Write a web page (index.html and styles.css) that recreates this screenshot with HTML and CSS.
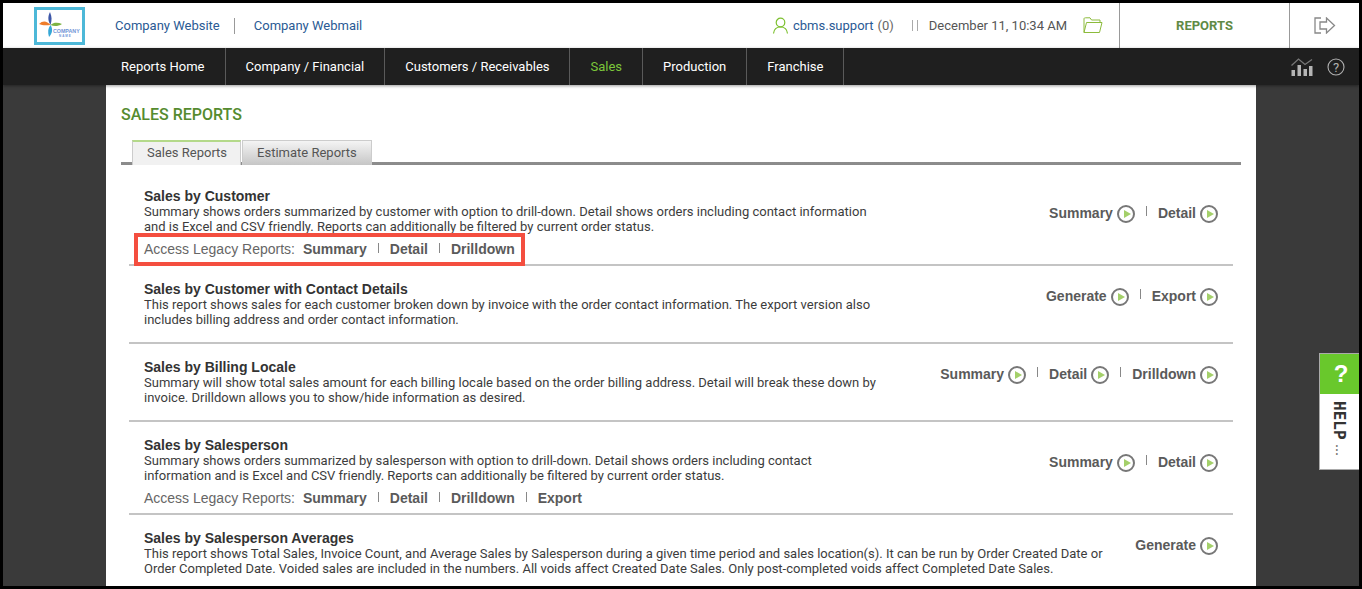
FILE: index.html
```html
<!DOCTYPE html>
<html lang="en">
<head>
<meta charset="utf-8">
<title>Sales Reports</title>
<link rel="stylesheet" href="styles.css">
</head>
<body>
<div class="page">
  <header class="top">
    <a class="logo" href="#">
      <svg width="45" height="32" viewBox="0 0 45 32">
        <path d="M13 2 C15 7 15 10 13.500 15 C11 11 10.500 7 13 2Z" fill="#3d57a8"/>
        <path d="M2 14 C6 10 10 11 13.500 15 C9 15.500 5 15.500 2 14Z" fill="#ef7d2b"/>
        <path d="M13.500 15 C17 12 21 12.500 25 14 C21 16.500 17 16.500 13.500 15Z" fill="#7cb342"/>
        <path d="M13.500 15 C16 19 15.500 23 12 27 C10.500 22 11 18 13.500 15Z" fill="#35a7d6"/>
        <text x="16" y="23" class="logo-a">COMPANY</text>
        <text x="22" y="27" class="logo-b">NAME</text>
      </svg>
    </a>
    <nav class="top-links">
      <a href="#">Company Website</a>
      <a href="#">Company Webmail</a>
    </nav>
    <div class="user">
      <svg width="17" height="17" viewBox="0 0 17 17" fill="none" stroke="#7cc02e" stroke-width="1.2"><circle cx="8.5" cy="5.5" r="4.3"/><path d="M1.5 16.5 C2 12 5 10 8.5 10 S15 12 15.5 16.5"/></svg>
      <a href="#">cbms.support</a> <span class="count">(0)</span>
    </div>
    <div class="date">December 11, 10:34 AM</div>
    <svg class="folder" width="20" height="17" viewBox="0 0 20 17" fill="none" stroke="#8cbb3c" stroke-width="1"><path d="M1 15.500 V2 C1 1 1.500 .8 2.500 .8 H7 L8.500 3 H17 V5.500"/><path d="M1 15.500 L3.500 5.500 H19 L16.500 15.500 Z"/></svg>
    <div class="module">REPORTS</div>
    <a class="logout" href="#" aria-label="Log out">
      <svg width="22" height="17" viewBox="0 0 22 17" fill="none" stroke="#888" stroke-width="1.300"><path d="M7 1 H1 V16 H7"/><path d="M6 5 H12.500 V1 L20.500 8.500 L12.500 16 V12 H6 Z"/></svg>
    </a>
  </header>
  <nav class="menu">
    <a href="#">Reports Home</a>
    <a href="#">Company / Financial</a>
    <a href="#">Customers / Receivables</a>
    <a href="#" class="on">Sales</a>
    <a href="#">Production</a>
    <a href="#">Franchise</a>
    <span class="menu-icons">
      <svg width="22" height="19" viewBox="0 0 22 19" fill="#b5b5b5"><rect x=".5" y="12" width="3.500" height="6"/><rect x="6.500" y="7" width="3.500" height="11"/><rect x="12.500" y="11" width="3.500" height="7"/><rect x="18" y="8" width="3.500" height="10"/><path d="M.5 7.500 L7.500 1 L14 6.500 L21 1.500" fill="none" stroke="#777" stroke-width="1.300"/></svg>
      <svg width="18" height="18" viewBox="0 0 18 18"><circle cx="9" cy="9" r="8" fill="none" stroke="#b0b0b0" stroke-width="1.100"/><text x="9" y="13.500" class="q">?</text></svg>
    </span>
  </nav>
  <main class="stage">
    <section class="sheet">
      <h1>SALES REPORTS</h1>
      <div class="tabs">
        <a href="#" class="tab active">Sales Reports</a>
        <a href="#" class="tab">Estimate Reports</a>
      </div>
      <article class="report r1">
        <div class="info">
          <h2>Sales by Customer</h2>
          <p>Summary shows orders summarized by customer with option to drill-down. Detail shows orders including contact information<br>and is Excel and CSV friendly. Reports can additionally be filtered by current order status.</p>
          <div class="legacy boxed"><span>Access Legacy Reports:</span><b>Summary</b><i></i><b>Detail</b><i></i><b>Drilldown</b></div>
        </div>
        <div class="actions"><a href="#">Summary<span class="go"></span></a><i></i><a href="#">Detail<span class="go"></span></a></div>
      </article>
      <article class="report r2">
        <div class="info">
          <h2>Sales by Customer with Contact Details</h2>
          <p>This report shows sales for each customer broken down by invoice with the order contact information. The export version also<br>includes billing address and order contact information.</p>
        </div>
        <div class="actions"><a href="#">Generate<span class="go"></span></a><i></i><a href="#">Export<span class="go"></span></a></div>
      </article>
      <article class="report r2">
        <div class="info">
          <h2>Sales by Billing Locale</h2>
          <p>Summary will show total sales amount for each billing locale based on the order billing address. Detail will break these down by<br>invoice. Drilldown allows you to show/hide information as desired.</p>
        </div>
        <div class="actions"><a href="#">Summary<span class="go"></span></a><i></i><a href="#">Detail<span class="go"></span></a><i></i><a href="#">Drilldown<span class="go"></span></a></div>
      </article>
      <article class="report r3">
        <div class="info">
          <h2>Sales by Salesperson</h2>
          <p>Summary shows orders summarized by salesperson with option to drill-down. Detail shows orders including contact<br>information and is Excel and CSV friendly. Reports can additionally be filtered by current order status.</p>
          <div class="legacy"><span>Access Legacy Reports:</span><b>Summary</b><i></i><b>Detail</b><i></i><b>Drilldown</b><i></i><b>Export</b></div>
        </div>
        <div class="actions"><a href="#">Summary<span class="go"></span></a><i></i><a href="#">Detail<span class="go"></span></a></div>
      </article>
      <article class="report r4">
        <div class="info wide">
          <h2>Sales by Salesperson Averages</h2>
          <p>This report shows Total Sales, Invoice Count, and Average Sales by Salesperson during a given time period and sales location(s). It can be run by Order Created Date or<br>Order Completed Date. Voided sales are included in the numbers. All voids affect Created Date Sales. Only post-completed voids affect Completed Date Sales.</p>
        </div>
        <div class="actions"><a href="#">Generate<span class="go"></span></a></div>
      </article>
    </section>
  </main>
  <aside class="help">
    <div class="help-q">?</div>
    <div class="help-t">HELP<span>...</span></div>
  </aside>
</div>
</body>
</html>
```
FILE: styles.css
```css
* { box-sizing: border-box; }
html, body { margin: 0; height: 100%; overflow: hidden; }
body { font-family: Roboto, "Liberation Sans", sans-serif; background: #000; }
a { text-decoration: none; color: inherit; }
.page { position: relative; width: 1362px; height: 589px; border: 3px solid #000; display: flex; flex-direction: column; overflow: hidden; }

.top { height: 45px; flex: none; background: #fff; display: flex; align-items: center; font-size: 13px; }
.logo { width: 51px; height: 38px; margin: 0 0 0 31px; border: 3px solid #4db8d8; display: flex; align-items: center; justify-content: center; background: #fff; }
.logo-a { font: 700 5.300px "Liberation Sans", sans-serif; fill: #6f93d6; }
.logo-b { font: 700 3px "Liberation Sans", sans-serif; fill: #6f93d6; letter-spacing: 1px; }
.top-links { display: flex; margin-left: 30px; color: #2a5a94; }
.top-links a { line-height: 16px; }
.top-links a:first-child { padding-right: 14px; border-right: 1px solid #999; margin-right: 19px; }
.user { margin-left: auto; display: flex; align-items: center; color: #666; white-space: pre; }
.user a { color: #2a5a94; margin-left: 4px; }
.count { margin-left: 4px; }
.date { margin-left: 18px; padding-left: 17px; color: #555; position: relative; }
.date::before { content: ""; position: absolute; left: 0; top: 2px; bottom: 2px; width: 4px; border-left: 1px solid #aaa; border-right: 1px solid #aaa; }
.folder { margin-left: 16px; margin-right: 16px; }
.module { width: 171px; height: 45px; border-left: 1px solid #999; border-right: 1px solid #999; display: flex; align-items: center; justify-content: center; font-weight: 700; font-size: 13px; color: #5f8a45; }
.logout { width: 69px; display: flex; justify-content: center; padding-left: 1px; }

.menu { height: 37px; flex: none; background: #1f1f1f; display: flex; padding-left: 103px; box-shadow: 0 1px 3px rgba(0,0,0,.4); position: relative; z-index: 1; }
.menu a { display: flex; align-items: center; padding: 0 20px 0 15px; color: #fff; font-size: 13px; font-weight: 400; border-right: 1px solid #5a5a5a; white-space: nowrap; }
.menu a + a { padding-left: 20px; }
.menu a.on { color: #7cc63a; }
.menu-icons { margin-left: auto; display: flex; align-items: center; gap: 14px; padding-right: 14px; padding-top: 1px; }
.q { font: 400 13px Roboto, sans-serif; fill: #b0b0b0; text-anchor: middle; }

.stage { flex: 1; background: #3a3a3a; padding: 0 103px; min-height: 0; }
.sheet { background: #fff; height: 100%; padding: 20px 15px 0 15px; overflow: hidden; }
h1 { margin: 0; font-size: 16px; line-height: 19px; font-weight: 500; color: #558b2f; }
.tabs { margin-top: 16px; height: 25px; display: flex; padding-left: 11px; gap: 1px; border-bottom: 3px solid; border-image: linear-gradient(#ddd, #8a8a8a) 1; align-items: flex-start; }
.tab { height: 25px; font-size: 13px; line-height: 24px; padding: 0 14px; color: #555; position: relative; z-index: 1; border: 1px solid #ccc; border-bottom: 0; background: linear-gradient(#f4f4f4, #c6c6c6); }
.tab.active { background: #f1f1f1; border-top: 2px solid #b4d98a; line-height: 21px; padding-right: 13px; }

.report { margin: 0 8px; padding: 0 15px; display: flex; justify-content: space-between; align-items: flex-start; border-bottom: 2px solid #c4c4c4; }
.r1 { height: 101px; padding-top: 23px; position: relative; }
.r2 { height: 78px; padding-top: 15px; }
.r3 { height: 93px; padding-top: 15px; }
.r4 { padding-top: 15px; border-bottom: 0; }
h2 { margin: 0; font: 700 14px/16px "Liberation Sans", sans-serif; color: #333; }
p { margin: 0; font-size: 13px; line-height: 15px; color: #3c3c3c; white-space: nowrap; }
.info { flex: none; }
.legacy { margin-top: 7px; display: flex; align-items: center; font: 14px/17px "Liberation Sans", sans-serif; color: #666; }
.legacy span { margin-right: 8px; }
.legacy b { color: #5a5a5a; }
.legacy i { width: 1px; height: 10px; background: #888; margin: -4px 11px 0 11px; }
.boxed { position: relative; }
.boxed::after { content: ""; position: absolute; left: -10px; right: -10px; top: -8px; bottom: -8px; border: 4px solid #f44e3f; pointer-events: none; }
.r1 .legacy.boxed { width: 371px; }
.actions { display: flex; align-items: center; font: 700 14px/20px "Liberation Sans", sans-serif; color: #5a5a5a; white-space: nowrap; margin-top: 5px; }
.r1 .actions { margin-top: 15px; }
.r3 .actions { margin-top: 15px; }
.actions a { display: flex; align-items: center; }
.actions i { width: 1px; height: 10px; background: #888; margin: -4px 11px 0 11px; }
.go { width: 18px; height: 18px; margin-left: 4px; margin-top: 1px; border: 2px solid #777; border-radius: 50%; position: relative; display: block; }
.go::after { content: ""; position: absolute; left: 5px; top: 3px; border-left: 7px solid #a4d06a; border-top: 4px solid transparent; border-bottom: 4px solid transparent; }

.help { position: absolute; left: 1316px; top: 350px; width: 43px; height: 117px; border: 1px solid #aaa; border-right: 0; background: #fff; }
.help-q { height: 40px; background: #69c82c; color: #fff; font: 700 24px/40px "Liberation Sans", sans-serif; text-align: center; }
.help-t { writing-mode: vertical-rl; font: 700 16px/38px "DejaVu Sans Mono", "Liberation Mono", monospace; color: #333; padding-top: 7px; white-space: nowrap; }
.help-t span { font-size: 10px; font-weight: 400; letter-spacing: -2px; margin-top: 3px; display: inline-block; }
```
